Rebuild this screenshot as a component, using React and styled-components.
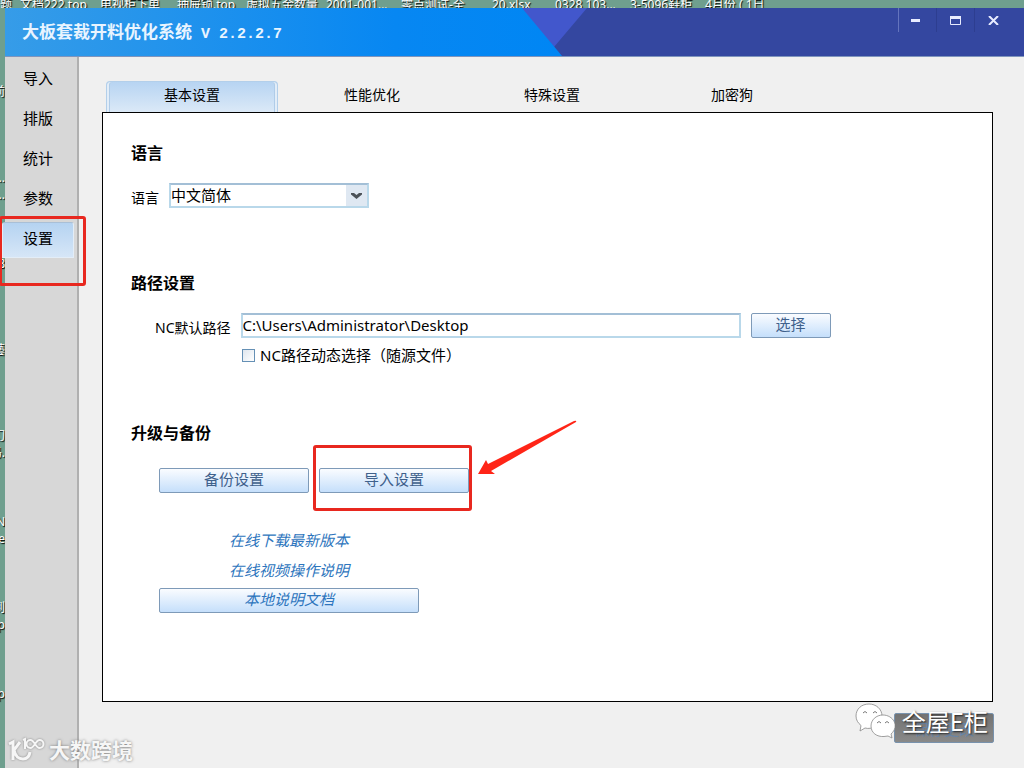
import React, { useState } from "react";
import styled, { createGlobalStyle } from "styled-components";

const GlobalStyle = createGlobalStyle`
  * {
    box-sizing: border-box;
  }

  body {
    margin: 0;
    font-family: "Noto Sans", "Noto Sans CJK SC", sans-serif;
    font-size: 15px;
    color: #000;
  }

  button,
  input,
  select {
    font-family: inherit;
    font-size: inherit;
  }
`;

const Desktop = styled.div`
  position: relative;
  min-height: 100vh;
  display: grid;
  grid-template-columns: 5px minmax(0, 1fr);
  grid-template-rows: 8px 1fr;
  background: #6f9f8e;
  overflow: hidden;
`;

const FileNames = styled.div`
  grid-column: 1 / 3;
  display: grid;
  grid-template-columns: 20px 80px 77px 69px 80px 75px 91px 63px 75px 75px 1fr;
  align-items: end;
  overflow: hidden;
  color: #fff;
  font-size: 12px;
  line-height: 10px;
  white-space: nowrap;
  text-shadow: 1px 1px 1px #000;
`;

const IconLabels = styled.div`
  padding-top: 75px;
  overflow: hidden;
  color: #fff;
  font-size: 12px;
  line-height: 17px;
  text-shadow: 1px 1px 1px #000;
`;

const IconLabel = styled.div`
  height: 86px;
  display: flex;
  flex-direction: column;
  align-items: flex-end;
  white-space: nowrap;

  &:last-child {
    height: auto;
  }
`;

const Window = styled.div`
  display: flex;
  flex-direction: column;
  min-width: 0;
  background: #f0f0f0;
`;

const TitleBar = styled.header`
  position: relative;
  display: flex;
  justify-content: space-between;
  height: 49px;
  background: #3447a0;
  border-bottom: 1px solid #7f95bd;
`;

const TitleArt = styled.svg`
  position: absolute;
  top: 0;
  left: 0;
  width: 600px;
  height: 48px;
`;

const Title = styled.h1`
  position: relative;
  margin: 0;
  padding-left: 17px;
  font-size: 17px;
  line-height: 48px;
  color: #e8f4ff;
`;

const Version = styled.span`
  font-family: "Liberation Mono", monospace;
  font-size: 15px;
`;

const WindowButtons = styled.div`
  display: flex;
  height: 24px;
  margin-right: 12px;
`;

const WindowButton = styled.button`
  width: 38px;
  padding: 0;
  border: 0;
  border-left: 1px solid ${({ $light }) => ($light ? "#6474bd" : "#2d3e90")};
  background: none;
  display: flex;
  align-items: center;
  justify-content: center;
`;

const Main = styled.div`
  flex: 1;
  display: flex;
`;

const Sidebar = styled.nav`
  width: 74px;
  flex: none;
  padding-top: 1px;
  background: #d7d7d7;
  border-right: 2px solid #b0b0b0;
`;

const SideButton = styled.button`
  display: block;
  width: 72px;
  height: 36px;
  margin: 4px 0 0 -3px;
  padding: 0 0 4px;
  border: 1px solid ${({ $active }) => ($active ? "#e3edf7" : "transparent")};
  border-top-color: ${({ $active }) => ($active ? "#a9bfd6" : "transparent")};
  border-radius: 3px 3px 0 0;
  background: ${({ $active }) =>
    $active ? "linear-gradient(#b5d3f1, #d6e6f7)" : "transparent"};
  line-height: 30px;
`;

const Content = styled.main`
  flex: 1;
  min-width: 0;
  display: flex;
  flex-direction: column;
  padding: 24px 31px 25px 23px;
`;

const Tabs = styled.div`
  display: flex;
  gap: 8px;
  padding-left: 4px;
`;

const Tab = styled.button`
  width: 172px;
  height: 31px;
  padding: 0 0 6px;
  font-size: 14px;
  border: 1px solid transparent;
  border-bottom: 0;
  border-radius: 4px 4px 0 0;
  background: none;

  ${({ $active }) =>
    $active &&
    `
    border-color: #b3cfea;
    background: linear-gradient(#b7d4f2, #dbe9f7);
    box-shadow: inset 2px 0 #e2edf8, inset -2px 0 #e2edf8, inset 3px 0 #b0cce8, inset -3px 0 #b0cce8;
  `}
`;

const Panel = styled.section`
  flex: 1;
  padding: 28px;
  background: #fff;
  border: 1px solid #000;
`;

const Group = styled.section`
  min-height: ${({ $tall }) => ($tall ? "150px" : "130px")};
`;

const Heading = styled.h2`
  margin: 0 0 18px;
  font-size: 16px;
  line-height: 24px;
`;

const Row = styled.div`
  display: flex;
  align-items: center;
  gap: 10px;
  padding-left: ${({ $indent }) => $indent || 0}px;
`;

const Label = styled.label`
  font-size: 14px;
  line-height: 20px;
  padding-top: 4px;
`;

const SelectBox = styled.div`
  position: relative;
  display: flex;
`;

const Select = styled.select`
  width: 200px;
  height: 25px;
  padding: 0 24px 2px 0;
  appearance: none;
  border: 2px solid #b9d8ea;
  border-top-color: #a3bfd6;
  border-radius: 0;
  background: linear-gradient(#dfe8f2, #dfe8f2) right / 21px 100% no-repeat #fff;
  color: #000;
`;

const Chevron = styled.svg`
  position: absolute;
  right: 7px;
  top: 9px;
  pointer-events: none;
`;

const PathInput = styled.input`
  width: 500px;
  height: 25px;
  padding: 0 0 2px;
  border: 2px solid #b9d8ea;
  border-top-color: #a3bfd6;
  color: #000;
`;

const CheckLabel = styled.label`
  display: flex;
  align-items: center;
  gap: 5px;
  padding: 6px 0 0 111px;
  line-height: 22px;
`;

const Checkbox = styled.input`
  appearance: none;
  width: 13px;
  height: 13px;
  margin: 0;
  border: 1px solid #6590b5;
  background: linear-gradient(135deg, #dfe6ee, #fff);
`;

const Button = styled.button`
  width: ${({ $width }) => $width}px;
  height: 25px;
  padding: 0 0 2px;
  border: 1px solid #7e9ab8;
  border-radius: 2px;
  background: linear-gradient(#fafcff, #c5dffb);
  color: #3f618c;
  line-height: 21px;
  ${({ $link }) => $link && "color: #2d75bd; font-style: italic;"}
`;

const BackupActions = styled.div`
  display: flex;
  gap: 10px;
  padding: 5px 0 0 28px;
`;

const Links = styled.div`
  display: flex;
  flex-direction: column;
  align-items: center;
  width: 260px;
  margin: 32px 0 0 28px;

  button {
    margin-top: 3px;
  }
`;

const DocLink = styled.a`
  line-height: 30px;
  color: #2d75bd;
  font-style: italic;
  text-decoration: none;
`;

const Footer = styled.footer`
  display: flex;
  justify-content: flex-end;
  margin: 11px -1px 0 0;
`;

const SaveButton = styled.button`
  width: 100px;
  height: 30px;
  padding: 0;
  border: 1px solid #7892ad;
  border-radius: 2px;
  background: linear-gradient(#737373, #898989);
  color: #6885a8;
`;

const Marker = styled.div`
  position: absolute;
  left: ${({ $x }) => $x}px;
  top: ${({ $y }) => $y}px;
  width: ${({ $w }) => $w}px;
  height: ${({ $h }) => $h}px;
  border: 3px solid #e8281f;
  border-radius: 3px;
  pointer-events: none;
`;

const Arrow = styled.svg`
  position: absolute;
  left: 476px;
  top: 418px;
  pointer-events: none;
`;

const Brand = styled.div`
  position: absolute;
  right: 36px;
  bottom: 28px;
  display: flex;
  align-items: center;
  gap: 7px;
  color: #fff;
  font-family: "Noto Sans CJK SC", sans-serif;
  font-size: 24px;
  line-height: 38px;
  text-shadow: 1px 1px 2px #222;
  pointer-events: none;
`;

const SiteMark = styled.div`
  position: absolute;
  left: 8px;
  bottom: 4px;
  display: flex;
  align-items: center;
  gap: 4px;
  color: #f6f6f6;
  font-size: 21px;
  font-weight: bold;
  line-height: 28px;
  text-shadow: 0 0 3px #777;
  pointer-events: none;

  svg {
    filter: drop-shadow(0 0 1px #888);
  }
`;

const files = [
  "题",
  "文档222.top",
  "电视柜下单",
  "抽屉锁.top",
  "虚拟五金数量",
  "2001-001...",
  "零点测试-全",
  "20.xlsx",
  "0328 103...",
  "3-5096鞋柜",
  "4月份 ( 1日",
];

const iconLabels = [
  ["前"],
  ["...", "..."],
  ["8"],
  ["藝"],
  ["幻", "吗."],
  ["N", "e"],
  ["到", "p"],
  ["p"],
];

const menu = ["导入", "排版", "统计", "参数", "设置"];
const tabs = ["基本设置", "性能优化", "特殊设置", "加密狗"];

const App = () => {
  const [page, setPage] = useState("设置");
  const [tab, setTab] = useState("基本设置");
  const [path, setPath] = useState("C:\\Users\\Administrator\\Desktop");

  return (
    <Desktop>
      <GlobalStyle />
      <FileNames>
        {files.map((name) => (
          <span key={name}>{name}</span>
        ))}
      </FileNames>
      <IconLabels>
        {iconLabels.map((lines, i) => (
          <IconLabel key={i}>
            {lines.map((line, j) => (
              <span key={j}>{line}</span>
            ))}
          </IconLabel>
        ))}
      </IconLabels>

      <Window>
        <TitleBar>
          <TitleArt viewBox="0 0 600 48" aria-hidden="true">
            <defs>
              <linearGradient id="sky" x1="0" x2="1">
                <stop offset="0" stopColor="#369ce8" />
                <stop offset="0.7" stopColor="#0787f2" />
                <stop offset="1" stopColor="#0086f4" />
              </linearGradient>
            </defs>
            <path d="M516 0H582L549 39Z" fill="#4257cc" />
            <path d="M0 0H517L557 48H0Z" fill="url(#sky)" />
          </TitleArt>
          <Title>
            大板套裁开料优化系统<Version> V 2.2.2.7</Version>
          </Title>
          <WindowButtons>
            <WindowButton $light aria-label="最小化">
              <svg width="14" height="10">
                <path d="M0 5.500H9" stroke="#e8ecff" strokeWidth="3" />
              </svg>
            </WindowButton>
            <WindowButton aria-label="最大化">
              <svg width="12" height="9">
                <path d="M.5 1V8.500H10.500V1" fill="none" stroke="#e8ecff" />
                <path d="M0 1.500H11" stroke="#e8ecff" strokeWidth="3" />
              </svg>
            </WindowButton>
            <WindowButton aria-label="关闭">
              <svg width="11" height="9">
                <path d="M1 0L10 9M10 0L1 9" stroke="#e8ecff" strokeWidth="2" />
              </svg>
            </WindowButton>
          </WindowButtons>
        </TitleBar>

        <Main>
          <Sidebar>
            {menu.map((item) => (
              <SideButton
                key={item}
                $active={item === page}
                onClick={() => setPage(item)}
              >
                {item}
              </SideButton>
            ))}
          </Sidebar>

          <Content>
            <Tabs>
              {tabs.map((item) => (
                <Tab
                  key={item}
                  $active={item === tab}
                  onClick={() => setTab(item)}
                >
                  {item}
                </Tab>
              ))}
            </Tabs>

            <Panel>
              <Group>
                <Heading>语言</Heading>
                <Row>
                  <Label htmlFor="language">语言</Label>
                  <SelectBox>
                    <Select id="language">
                      <option>中文简体</option>
                    </Select>
                    <Chevron width="11" height="8">
                      <path
                        d="M0 1H3L5.500 3L8 1H11V2.500L5.500 7L0 2.500Z"
                        fill="#4c5258"
                      />
                    </Chevron>
                  </SelectBox>
                </Row>
              </Group>

              <Group $tall>
                <Heading>路径设置</Heading>
                <Row $indent={24}>
                  <Label htmlFor="path">NC默认路径</Label>
                  <PathInput
                    id="path"
                    value={path}
                    onChange={(e) => setPath(e.target.value)}
                  />
                  <Button $width={80}>选择</Button>
                </Row>
                <CheckLabel>
                  <Checkbox type="checkbox" />
                  NC路径动态选择（随源文件）
                </CheckLabel>
              </Group>

              <Group>
                <Heading>升级与备份</Heading>
                <BackupActions>
                  <Button $width={150}>备份设置</Button>
                  <Button $width={150}>导入设置</Button>
                </BackupActions>
                <Links>
                  <DocLink href="#download">在线下载最新版本</DocLink>
                  <DocLink href="#video">在线视频操作说明</DocLink>
                  <Button $width={260} $link>
                    本地说明文档
                  </Button>
                </Links>
              </Group>
            </Panel>

            <Footer>
              <SaveButton>保存更改</SaveButton>
            </Footer>
          </Content>
        </Main>
      </Window>

      <Marker $x={-1} $y={216} $w={87} $h={70} />
      <Marker $x={313} $y={445} $w={159} $h={66} />
      <Arrow width="104" height="60">
        <path
          d="M2 56L10 42L12 46L98 3Q101 2 100 4L15 53L19 56Z"
          fill="#ff2517"
        />
      </Arrow>

      <Brand>
        <svg width="40" height="36" viewBox="0 0 40 36">
          <g fill="#fff" stroke="#888" strokeWidth="0.8">
            <path d="M14 1C6.500 1 1 6 1 13C1 17 3 20 6 22.500L5 28L10 25C17 27 27 22 27 13C27 6 21 1 14 1Z" />
            <path d="M28 12C21 12 16 17 16 23C16 30 22 34 29 33.500L33 33L37 35L36 31C45 23 38 12 28 12Z" />
          </g>
          <path
            d="M8 10Q10 7 12 10M18 10Q20 7 22 10M22 20Q24 17 26 20M30 20Q32 17 34 20"
            fill="none"
            stroke="#777"
          />
        </svg>
        全屋E柜
      </Brand>

      <SiteMark>
        <svg width="37" height="26" viewBox="0 0 37 26">
          <g fill="none" stroke="#f6f6f6" strokeWidth="3">
            <path d="M1 7L5 5V23M12 5L6 13Q8 22 15 22Q21 22 22 15" />
            <path d="M15 3L17 2V12" strokeWidth="2" />
            <path
              d="M27 7C25 4 24 3 22.500 3A4 4 0 0 0 22.500 11C24 11 25 10 27 7C29 4 30 3 31.500 3A4 4 0 0 1 31.500 11C30 11 29 10 27 7Z"
              strokeWidth="2"
            />
          </g>
        </svg>
        大数跨境
      </SiteMark>
    </Desktop>
  );
};

export default App;
